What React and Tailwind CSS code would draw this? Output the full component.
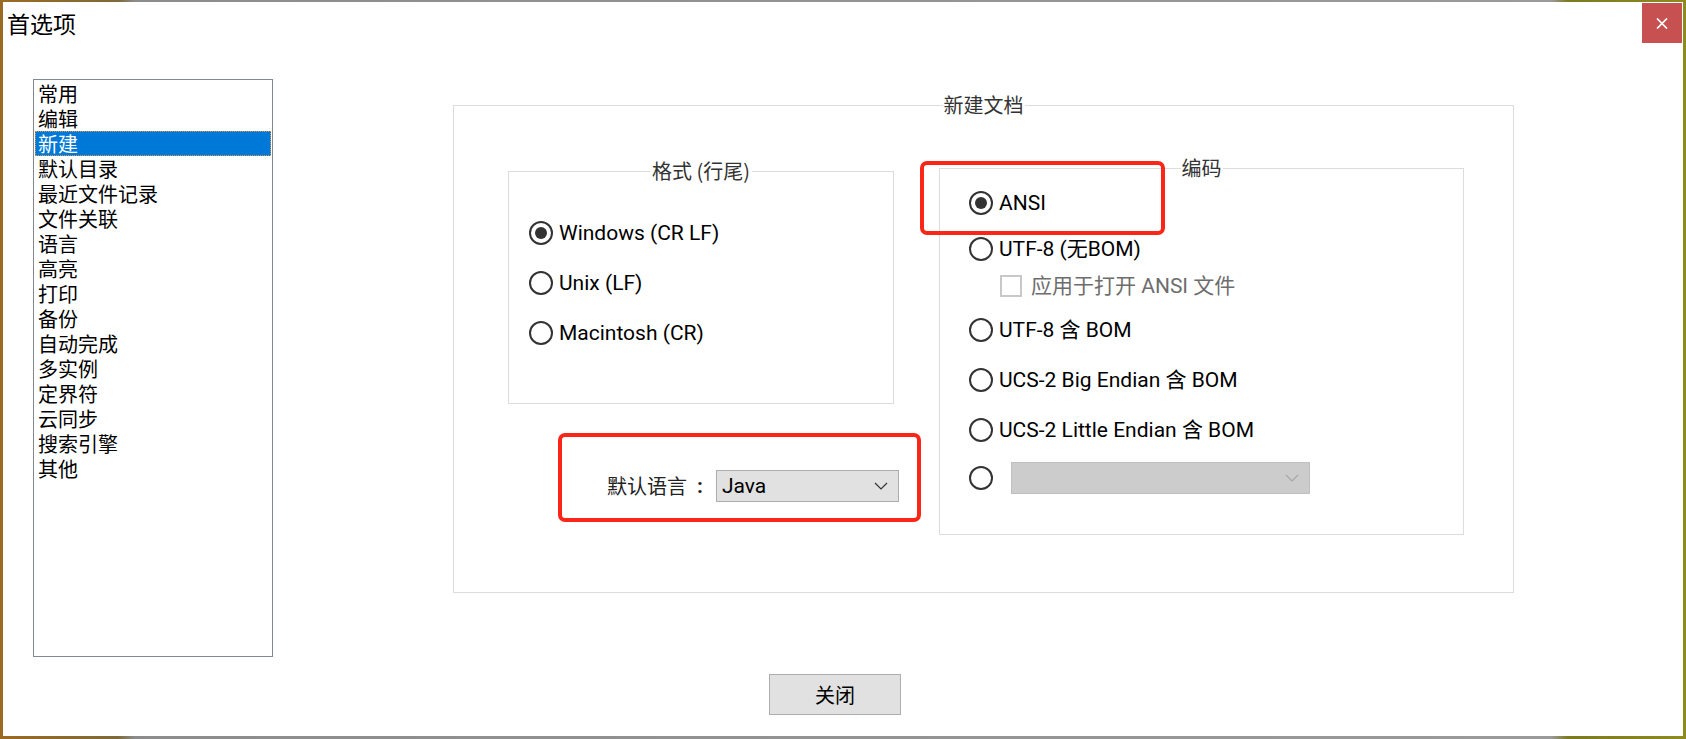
import React from "react";

function Radio({ checked }) {
  return (
    <span className="w-[24px] h-[24px] rounded-full border-2 border-[#333333] flex items-center justify-center shrink-0 bg-white">
      {checked && <span className="w-[12px] h-[12px] rounded-full bg-[#333333]" />}
    </span>
  );
}

function Chevron({ color }) {
  return (
    <svg width="14" height="8" viewBox="0 0 14 8" fill="none">
      <path d="M1 1 L7 7 L13 1" stroke={color} strokeWidth="1.2" />
    </svg>
  );
}

function RadioRow({ h, checked, children }) {
  return (
    <div className={`flex items-center ${h}`}>
      <Radio checked={checked} />
      <span className="ml-[6px] text-[21px] leading-none text-black whitespace-nowrap">{children}</span>
    </div>
  );
}

const items = [
  "常用",
  "编辑",
  "新建",
  "默认目录",
  "最近文件记录",
  "文件关联",
  "语言",
  "高亮",
  "打印",
  "备份",
  "自动完成",
  "多实例",
  "定界符",
  "云同步",
  "搜索引擎",
  "其他",
];

export default function App() {
  return (
    <div className="w-[1686px] h-[739px] pt-[2px] pl-[3px] overflow-hidden bg-[linear-gradient(90deg,#9b6a22_0%,#7d6a3a_7%,#8c8c8c_8%,#9a9a9a_92%,#7c7a22_93%,#8d8b20_100%)] font-['Roboto','Noto_Sans_CJK_SC',sans-serif]">
      <div className="w-[1680px] h-[734px] bg-white flex flex-col">
        {/* title bar */}
        <div className="flex justify-between h-[42px]">
          <div className="pl-[4px] h-[42px] flex items-center text-[23px] leading-none text-black font-['Noto_Sans_CJK_SC',sans-serif]">
            首选项
          </div>
          <div className="mt-[1px] mr-[1px] w-[40px] h-[40px] bg-[#c75050] flex items-center justify-center">
            <svg width="12" height="11" viewBox="0 0 12 11" fill="none">
              <path d="M1 0.5 L11 10.5 M11 0.5 L1 10.5" stroke="#ffffff" strokeWidth="1.7" />
            </svg>
          </div>
        </div>

        {/* body */}
        <div className="flex items-start pl-[30px]">
          {/* list box */}
          <div className="mt-[35px] w-[240px] h-[578px] border border-[#828790] p-[1px] font-['Noto_Sans_CJK_SC',sans-serif]">
            {items.map((t) => (
              <div
                key={t}
                className={
                  t === "新建"
                    ? "h-[25px] leading-[25px] pl-[3px] text-[20px] bg-[#0078d7] text-white outline-1 outline-dotted outline-[#d89a4a] -outline-offset-1"
                    : "h-[25px] leading-[25px] pl-[3px] text-[20px] text-black"
                }
              >
                {t}
              </div>
            ))}
          </div>

          {/* right column */}
          <div className="ml-[180px] mt-[49px] flex flex-col items-start">
            <fieldset className="w-[1061px] h-[500px] border border-[#dcdcdc]">
              <legend className="mx-auto px-[1px] text-[20px] leading-[24px] text-[#333333] font-['Noto_Sans_CJK_SC',sans-serif]">
                新建文档
              </legend>
              <div className="flex items-start pl-[54px] pt-[39px]">
                {/* left column */}
                <div className="mt-[3px] w-[386px] flex flex-col items-start">
                  <fieldset className="w-[386px] h-[245px] border border-[#dcdcdc]">
                    <legend className="mx-auto px-[2px] text-[20px] leading-[24px] text-[#333333] font-['Noto_Sans_CJK_SC',sans-serif]">
                      格式 (行尾)
                    </legend>
                    <div className="pl-[20px] pt-[25px] flex flex-col">
                      <RadioRow h="h-[50px]" checked>
                        Windows (CR LF)
                      </RadioRow>
                      <RadioRow h="h-[50px]">Unix (LF)</RadioRow>
                      <RadioRow h="h-[50px]">Macintosh (CR)</RadioRow>
                    </div>
                  </fieldset>

                  <div className="ml-[50px] mt-[29px] w-[363px] h-[89px] shrink-0 border-4 border-[#fb2518] rounded-[7px] flex flex-col justify-end pb-[16px] pl-[45px]">
                    <div className="flex items-center">
                      <span className="text-[20px] leading-none text-[#222222] font-['Noto_Sans_CJK_SC',sans-serif]">
                        默认语言
                      </span>
                      <span className="ml-[10px] mr-[13px] text-[21px] leading-none font-bold text-[#222222]">:</span>
                      <div className="w-[183px] h-[32px] bg-[#e1e1e1] border border-[#adadad] flex items-center justify-between pl-[5px] pr-[10px]">
                        <span className="text-[21px] leading-none text-black">Java</span>
                        <Chevron color="#333333" />
                      </div>
                    </div>
                  </div>
                </div>

                {/* encoding column */}
                <div className="ml-[45px] relative">
                  <fieldset className="w-[525px] h-[379px] border border-[#dcdcdc]">
                    <legend className="mx-auto px-[1px] text-[20px] leading-[24px] text-[#333333] font-['Noto_Sans_CJK_SC',sans-serif]">
                      编码
                    </legend>
                    <div className="pl-[29px] flex flex-col">
                      <RadioRow h="h-[46px]" checked>
                        ANSI
                      </RadioRow>
                      <RadioRow h="h-[46px]">UTF-8 (无BOM)</RadioRow>
                      <div className="h-[28px] flex items-center pl-[31px]">
                        <span className="w-[22px] h-[22px] border-2 border-[#c8c8c8] bg-white shrink-0" />
                        <span className="ml-[9px] text-[21px] leading-none text-[#6d6d6d] whitespace-nowrap">
                          应用于打开 ANSI 文件
                        </span>
                      </div>
                      <RadioRow h="h-[60px]">UTF-8 含 BOM</RadioRow>
                      <RadioRow h="h-[40px]">UCS-2 Big Endian 含 BOM</RadioRow>
                      <RadioRow h="h-[60px]">UCS-2 Little Endian 含 BOM</RadioRow>
                      <div className="h-[36px] flex items-center">
                        <Radio />
                        <div className="ml-[18px] w-[299px] h-[32px] bg-[#cccccc] border border-[#bfbfbf] flex items-center justify-end pr-[10px]">
                          <Chevron color="#a6a6a6" />
                        </div>
                      </div>
                    </div>
                  </fieldset>
                  <div className="absolute left-[-19px] top-[5px] w-[245px] h-[74px] border-4 border-[#fb2518] rounded-[7px]" />
                </div>
              </div>
            </fieldset>

            <button className="ml-[316px] mt-[81px] w-[132px] h-[41px] bg-[#e1e1e1] border border-[#adadad] text-[20px] leading-none text-black font-['Noto_Sans_CJK_SC',sans-serif]">
              关闭
            </button>
          </div>
        </div>
      </div>
    </div>
  );
}
